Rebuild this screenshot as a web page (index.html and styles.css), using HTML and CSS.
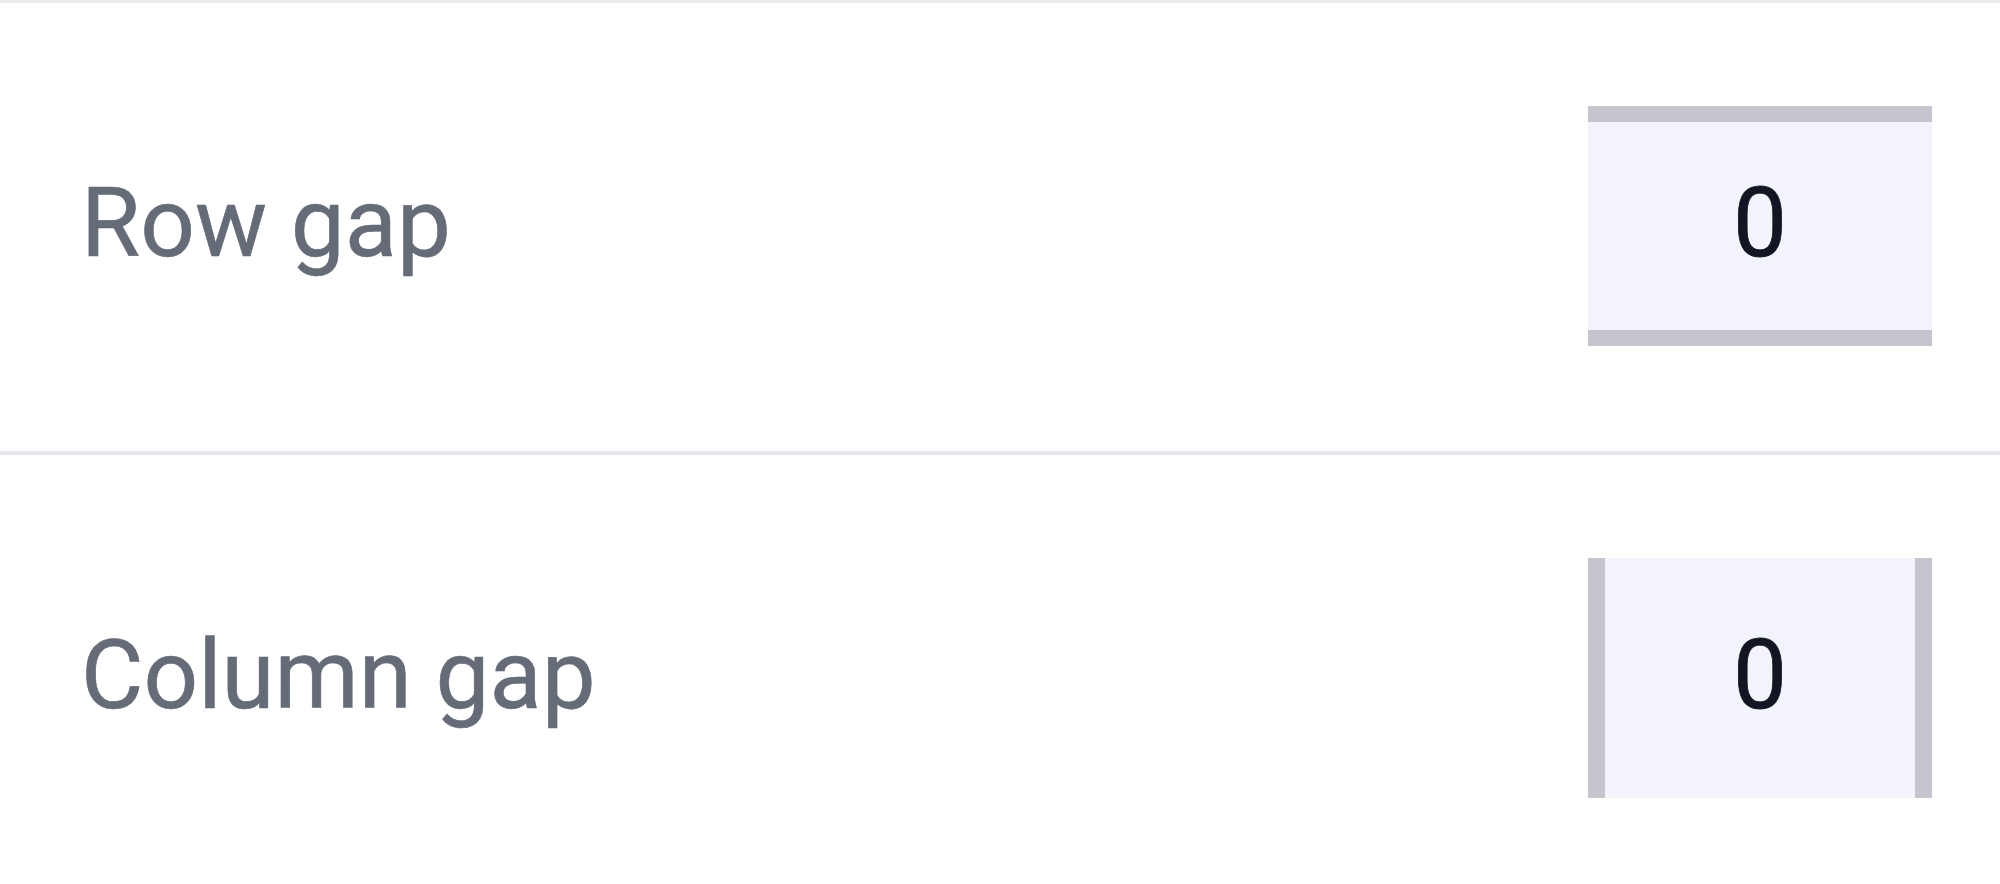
FILE: index.html
```html
<!DOCTYPE html>
<html lang="en">
<head>
<meta charset="utf-8">
<title>Gap settings</title>
<link rel="stylesheet" href="styles.css">
</head>
<body>
  <div class="panel">
    <div class="row">
      <span class="label">Row gap</span>
      <div class="field field-row"><span class="value">0</span></div>
    </div>
    <div class="row">
      <span class="label">Column gap</span>
      <div class="field field-col"><span class="value">0</span></div>
    </div>
  </div>
</body>
</html>
```
FILE: styles.css
```css
html, body {
  margin: 0;
  padding: 0;
  background: #ffffff;
}
body {
  font-family: Roboto, "Liberation Sans", sans-serif;
  overflow: hidden;
}
.panel {
  border-top: 3px solid #ebebf0;
  display: flex;
  flex-direction: column;
}
.row {
  height: 446px;
  display: flex;
  align-items: center;
  justify-content: space-between;
  padding: 0 68px 2px 81px;
  border-bottom: 4px solid #e7e7ee;
}
.label {
  font-size: 96px;
  font-weight: 400;
  color: #656b77;
  line-height: 1;
  margin-top: -6px;
  -webkit-text-stroke: 0.6px #656b77;
}
.field {
  box-sizing: border-box;
  width: 344px;
  height: 240px;
  background: #f3f4fb;
  display: flex;
  align-items: center;
  justify-content: center;
}
.field-row {
  border-top: 16px solid #c5c6cd;
  border-bottom: 16px solid #c5c6cd;
}
.field-col {
  border-left: 17px solid #c5c6cd;
  border-right: 17px solid #c5c6cd;
}
.value {
  font-size: 96px;
  font-weight: 400;
  color: #111622;
  line-height: 1;
  margin-top: -6px;
  -webkit-text-stroke: 0.8px #111622;
}
```
